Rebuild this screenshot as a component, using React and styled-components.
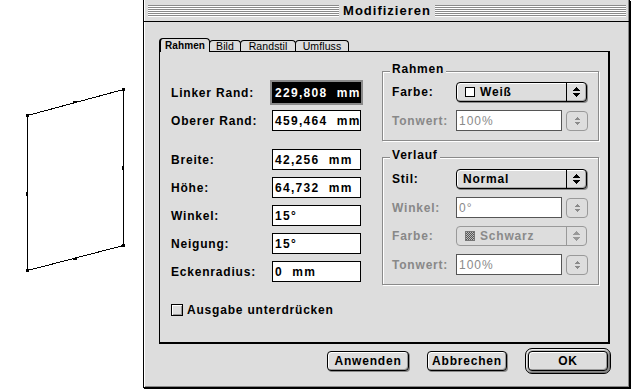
import React from 'react';
import styled, { createGlobalStyle, css } from 'styled-components';

const GlobalStyle = createGlobalStyle`
  html, body { margin: 0; padding: 0; background: #fff; }
  body { font-family: "Liberation Sans", Arial, sans-serif; color: #000; }
`;

const Page = styled.div`
  display: flex;
  width: 632px;
  height: 389px;
  overflow: hidden;
  background: #fff;
`;

const Canvas = styled.div`
  width: 143px;
  flex: none;
  background: #fff;
  svg { display: block; }
`;

const Window = styled.div`
  width: 487px;
  height: 388px;
  flex: none;
  box-sizing: border-box;
  border: 1px solid #000;
  border-top: 0;
  background: #dddddd;
  box-shadow: inset 1px 0 0 #fff, inset -1px -1px 0 #888, 1px 1px 0 #000;
  display: flex;
  flex-direction: column;
`;

const TitleBar = styled.div`
  height: 21px;
  border-bottom: 1px solid #000;
  display: flex;
  align-items: center;
  gap: 3px;
  padding: 0 3px 0 4px;
`;

const Stripes = styled.div`
  flex: 1;
  height: 12px;
  margin-top: 1px;
  background: repeating-linear-gradient(to bottom, #8a8a8a 0 1px, #fff 1px 2px);
`;

const Title = styled.div`
  font-weight: bold;
  font-size: 13px;
  letter-spacing: 1px;
  line-height: 21px;
  padding: 0 1px;
`;

const Body = styled.div`
  flex: 1;
  display: flex;
  flex-direction: column;
  padding: 16px 18px 0 15px;
`;

const TabStrip = styled.div`
  display: flex;
  align-items: flex-end;
  height: 13px;
`;

const Tab = styled.div`
  width: ${p => p.$w}px;
  height: 11px;
  box-sizing: border-box;
  margin-left: -1px;
  border: 1px solid #000;
  border-bottom: 0;
  border-radius: 4px 4px 0 0;
  background: #dddddd;
  font-size: 10.5px;
  letter-spacing: 0.1px;
  display: flex;
  align-items: center;
  justify-content: center;
  line-height: 10px;
  ${p => p.$active && css`
    margin-left: 0;
    height: 14px;
    margin-bottom: -1px;
    border-left-width: 2px;
    font-weight: bold;
    font-size: 10px;
    position: relative;
    z-index: 1;
    padding-top: 1px;
  `}
`;

const TabPanel = styled.div`
  width: 451px;
  height: 293px;
  box-sizing: border-box;
  border: 1px solid #000;
  border-right-width: 2px;
  border-bottom-width: 2px;
  padding-left: 11px;
  display: flex;
  flex-direction: column;
`;

const Columns = styled.div`
  display: grid;
  grid-template-columns: 190px 217px;
  column-gap: 21px;
  align-items: start;
`;

const LeftCol = styled.div`
  display: flex;
  flex-direction: column;
  gap: 7px;
  padding-top: 30px;
`;

const FieldRow = styled.div`
  display: flex;
  align-items: center;
  height: 21px;
  ${p => p.$spaced && css`margin-top: 11px;`}
`;

const Label = styled.div`
  width: ${p => p.$w}px;
  flex: none;
  font-size: 12px;
  font-weight: bold;
  letter-spacing: 0.8px;
  color: ${p => (p.$disabled ? '#888' : '#000')};
  white-space: nowrap;
`;

const TextField = styled.div`
  width: ${p => p.$w}px;
  height: 21px;
  flex: none;
  box-sizing: border-box;
  border: 1px solid #000;
  background: #fff;
  padding: 0 2px;
  display: flex;
  align-items: center;
  font-size: 12px;
  font-weight: bold;
  letter-spacing: 1.3px;
  white-space: pre;
  overflow: hidden;
  ${p => p.$selected && css`
    background: #000;
    color: #fff;
    box-shadow: 0 0 0 2px #8a8a8a;
  `}
  ${p => p.$disabled && css`
    border-color: #555;
    color: #8a8a8a;
    font-weight: normal;
    letter-spacing: 1px;
  `}
`;

const RightCol = styled.div`
  display: flex;
  flex-direction: column;
  gap: 16px;
  padding-top: 19px;
`;

const GroupBox = styled.div`
  position: relative;
  border: 1px solid #8a8a8a;
  box-shadow: inset 1px 1px 0 #fff, 1px 1px 0 #fff;
  padding: ${p => p.$pad};
  display: flex;
  flex-direction: column;
  gap: 8px;
`;

const Legend = styled.div`
  position: absolute;
  top: -9px;
  left: 7px;
  padding: 0 2px;
  background: #dddddd;
  font-size: 12px;
  font-weight: bold;
  letter-spacing: 0.8px;
  line-height: 13px;
`;

const FormRow = styled.div`
  display: flex;
  align-items: center;
  height: ${p => p.$h}px;
`;

const Popup = styled.div`
  width: 131px;
  height: 20px;
  box-sizing: border-box;
  border: 1px solid ${p => (p.$disabled ? '#999' : '#000')};
  border-radius: 4px;
  background: #dddddd;
  box-shadow: ${p => (p.$disabled ? 'none' : 'inset 1px 1px 0 #fff, inset -1px -1px 0 #aaa, 1px 1px 0 #8a8a8a')};
  display: flex;
  color: ${p => (p.$disabled ? '#8a8a8a' : '#000')};
`;

const PopupValue = styled.div`
  flex: 1;
  display: flex;
  align-items: center;
  gap: 5px;
  padding-left: ${p => p.$pl}px;
  font-size: 12px;
  font-weight: bold;
  letter-spacing: 0.8px;
`;

const Swatch = styled.span`
  width: 10px;
  height: 10px;
  box-sizing: border-box;
  border: 1px solid ${p => (p.$pattern ? '#777' : '#000')};
  background: ${p => (p.$pattern
    ? 'repeating-conic-gradient(#555 0 25%, #bbb 0 50%) 0 0 / 2px 2px'
    : '#fff')};
  flex: none;
`;

const PopupArrow = styled.div`
  width: 19px;
  flex: none;
  border-left: 1px solid ${p => (p.$disabled ? '#999' : '#000')};
  display: flex;
  align-items: center;
  justify-content: center;
`;

const Stepper = styled.div`
  width: 22px;
  height: 20px;
  margin-left: 4px;
  box-sizing: border-box;
  border: 1px solid #999;
  border-radius: 4px;
  display: flex;
  align-items: center;
  justify-content: center;
`;

const CheckRow = styled.div`
  display: flex;
  align-items: center;
  height: 14px;
  margin-top: 18px;
  gap: 4px;
`;

const CheckBox = styled.span`
  width: 12px;
  height: 12px;
  box-sizing: border-box;
  border: 1px solid #000;
  background: #dddddd;
  box-shadow: inset 1px 1px 0 #fff, inset -1px -1px 0 #999;
`;

const CheckLabel = styled.span`
  font-size: 12px;
  font-weight: bold;
  letter-spacing: 0.8px;
`;

const ButtonRow = styled.div`
  display: flex;
  justify-content: flex-end;
  align-items: center;
  gap: 18px;
  margin-top: 4px;
`;

const PushButton = styled.div`
  width: ${p => p.$w}px;
  height: 20px;
  box-sizing: border-box;
  border: 1px solid #000;
  border-radius: 4px;
  background: #dddddd;
  box-shadow: inset 1px 1px 0 #fff, inset -1px -1px 0 #999, 1px 1px 0 #8a8a8a;
  display: flex;
  align-items: center;
  justify-content: center;
  font-size: 12px;
  font-weight: bold;
  letter-spacing: 0.8px;
`;

const DefaultRing = styled.div`
  padding: 2px;
  border: 1px solid #000;
  border-radius: 7px;
  background: #b5b5b5;
  box-shadow: inset 1px 1px 0 #eee, inset -1px -1px 0 #777;
  display: flex;
`;

const Arrows = ({ color = '#000' }) => (
  <svg width="7" height="10" viewBox="0 0 7 10" shapeRendering="crispEdges">
    <polygon points="3.5,0 7,4 0,4" fill={color} />
    <polygon points="0,6 7,6 3.5,10" fill={color} />
  </svg>
);

const SmallArrows = () => (
  <svg width="7" height="10" viewBox="0 0 7 10" shapeRendering="crispEdges">
    <polygon points="3.5,0.5 6.5,4 0.5,4" fill="#8a8a8a" />
    <polygon points="0.5,6 6.5,6 3.5,9.5" fill="#8a8a8a" />
  </svg>
);

const Drawing = () => (
  <svg width="143" height="389" viewBox="0 0 143 389">
    <polygon
      points="27.5,115.5 123.5,89.5 123.5,245.5 27.5,270.5"
      fill="none"
      stroke="#000"
      strokeWidth="1"
      shapeRendering="crispEdges"
    />
    <g fill="#000" shapeRendering="crispEdges">
      <rect x="26" y="114" width="3" height="3" />
      <rect x="122" y="88" width="3" height="3" />
      <rect x="122" y="244" width="3" height="3" />
      <rect x="26" y="269" width="3" height="3" />
      <rect x="73" y="101" width="4" height="2" />
      <rect x="122" y="166" width="2" height="4" />
      <rect x="26" y="192" width="2" height="4" />
      <rect x="73" y="258" width="4" height="2" />
    </g>
  </svg>
);

const leftFields = [
  { label: 'Linker Rand:', value: '229,808  mm', selected: true },
  { label: 'Oberer Rand:', value: '459,464  mm' },
  { label: 'Breite:', value: '42,256  mm', spaced: true },
  { label: 'Höhe:', value: '64,732  mm' },
  { label: 'Winkel:', value: '15°' },
  { label: 'Neigung:', value: '15°' },
  { label: 'Eckenradius:', value: '0  mm' },
];

export default function App() {
  return (
    <>
      <GlobalStyle />
      <Page>
        <Canvas>
          <Drawing />
        </Canvas>
        <Window>
          <TitleBar>
            <Stripes />
            <Title>Modifizieren</Title>
            <Stripes />
          </TitleBar>
          <Body>
            <TabStrip>
              <Tab $active $w={51}>Rahmen</Tab>
              <Tab $w={32}>Bild</Tab>
              <Tab $w={56}>Randstil</Tab>
              <Tab $w={54}>Umfluss</Tab>
            </TabStrip>
            <TabPanel>
              <Columns>
                <LeftCol>
                  {leftFields.map(f => (
                    <FieldRow key={f.label} $spaced={f.spaced}>
                      <Label $w={101}>{f.label}</Label>
                      <TextField $w={89} $selected={f.selected}>{f.value}</TextField>
                    </FieldRow>
                  ))}
                </LeftCol>
                <RightCol>
                  <GroupBox $pad="10px 10px 9px 9px">
                    <Legend>Rahmen</Legend>
                    <FormRow $h={20}>
                      <Label $w={64}>Farbe:</Label>
                      <Popup>
                        <PopupValue $pl={8}><Swatch />Weiß</PopupValue>
                        <PopupArrow><Arrows /></PopupArrow>
                      </Popup>
                    </FormRow>
                    <FormRow $h={21}>
                      <Label $w={64} $disabled>Tonwert:</Label>
                      <TextField $w={106} $disabled>100%</TextField>
                      <Stepper><SmallArrows /></Stepper>
                    </FormRow>
                  </GroupBox>
                  <GroupBox $pad="11px 10px 9px 9px">
                    <Legend>Verlauf</Legend>
                    <FormRow $h={20}>
                      <Label $w={64}>Stil:</Label>
                      <Popup>
                        <PopupValue $pl={6}>Normal</PopupValue>
                        <PopupArrow><Arrows /></PopupArrow>
                      </Popup>
                    </FormRow>
                    <FormRow $h={21}>
                      <Label $w={64} $disabled>Winkel:</Label>
                      <TextField $w={106} $disabled>0°</TextField>
                      <Stepper><SmallArrows /></Stepper>
                    </FormRow>
                    <FormRow $h={20}>
                      <Label $w={64} $disabled>Farbe:</Label>
                      <Popup $disabled>
                        <PopupValue $pl={8}><Swatch $pattern />Schwarz</PopupValue>
                        <PopupArrow $disabled><Arrows color="#999" /></PopupArrow>
                      </Popup>
                    </FormRow>
                    <FormRow $h={21}>
                      <Label $w={64} $disabled>Tonwert:</Label>
                      <TextField $w={106} $disabled>100%</TextField>
                      <Stepper><SmallArrows /></Stepper>
                    </FormRow>
                  </GroupBox>
                </RightCol>
              </Columns>
              <CheckRow>
                <CheckBox />
                <CheckLabel>Ausgabe unterdrücken</CheckLabel>
              </CheckRow>
            </TabPanel>
            <ButtonRow>
              <PushButton $w={82}>Anwenden</PushButton>
              <PushButton $w={80}>Abbrechen</PushButton>
              <DefaultRing>
                <PushButton $w={80}>OK</PushButton>
              </DefaultRing>
            </ButtonRow>
          </Body>
        </Window>
      </Page>
    </>
  );
}
